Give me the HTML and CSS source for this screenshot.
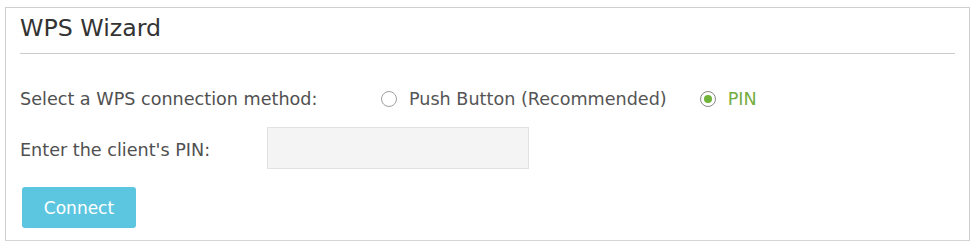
FILE: index.html
```html
<!DOCTYPE html>
<html>
<head>
<meta charset="utf-8">
<link rel="stylesheet" href="styles.css">
</head>
<body>
<div class="panel">
  <h2 class="title">WPS Wizard</h2>
  <div class="rule"></div>
  <div class="row row-method">
    <span class="label label-method">Select a WPS connection method:</span>
    <label class="option">
      <span class="radio"></span>
      <span class="option-text">Push Button (Recommended)</span>
    </label>
    <label class="option option-checked">
      <span class="radio radio-checked"></span>
      <span class="option-text">PIN</span>
    </label>
  </div>
  <div class="row row-pin">
    <span class="label label-pin">Enter the client's PIN:</span>
    <input class="pin-input" type="text">
  </div>
  <button class="connect">Connect</button>
</div>
</body>
</html>
```
FILE: styles.css
```css
html, body {
  margin: 0;
  padding: 0;
  background: #fff;
}
body {
  font-family: "DejaVu Sans", Verdana, sans-serif;
}
.panel {
  margin: 7px 9px 0 5px;
  height: 234px;
  box-sizing: border-box;
  border: 1px solid #cfcfcf;
  border-bottom-color: #d6d6d6;
  padding: 6px 14px 0 14px;
}
.title {
  margin: 0;
  font-size: 23.7px;
  font-weight: normal;
  line-height: 29px;
  color: #333;
}
.rule {
  margin-top: 10px;
  height: 1px;
  background: #cbcbcb;
}
.row {
  display: flex;
  align-items: center;
}
.row-method {
  margin-top: 25px;
  height: 40px;
}
.label {
  font-size: 17.6px;
  color: #505050;
}
.label-method {
  width: 361px;
  flex: none;
}
.option {
  display: flex;
  align-items: center;
  gap: 12px;
  margin-right: 33px;
  font-size: 17.6px;
  color: #555;
}
.option-checked {
  color: #74ad3f;
}
.radio {
  flex: none;
  width: 16px;
  height: 16px;
  box-sizing: border-box;
  border: 1.6px solid #a0a0a0;
  border-radius: 50%;
  display: flex;
  align-items: center;
  justify-content: center;
}
.radio-checked {
  border-color: #888;
}
.radio-checked::after {
  content: "";
  width: 8px;
  height: 8px;
  border-radius: 50%;
  background: #6fb33a;
}
.row-pin {
  margin-top: 8px;
}
.label-pin {
  width: 247px;
  flex: none;
  margin-top: 3px;
}
.pin-input {
  width: 262px;
  height: 42px;
  box-sizing: border-box;
  margin: 0;
  background: #f4f4f4;
  border: 1px solid #e2e2e2;
  outline: none;
}
.connect {
  display: block;
  margin: 18px 0 0 2px;
  width: 114px;
  height: 41px;
  border: none;
  border-radius: 3px;
  background: #5cc6e0;
  color: #fff;
  font-family: "DejaVu Sans", Verdana, sans-serif;
  font-size: 17px;
  padding: 0;
}
```
